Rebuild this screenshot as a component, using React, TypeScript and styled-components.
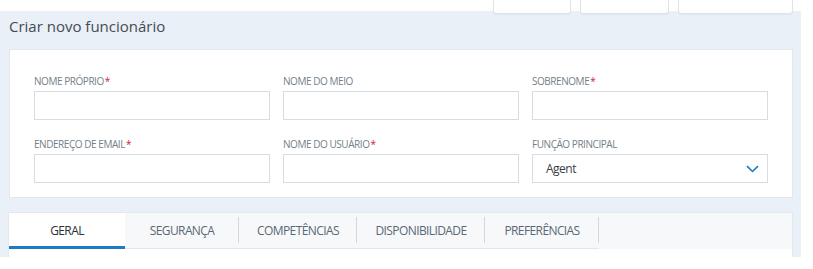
import React from "react";
import styled, { createGlobalStyle } from "styled-components";

const GlobalStyle = createGlobalStyle`
  html, body { margin: 0; padding: 0; background: #ffffff; }
  body { font-family: "Open Sans", "Noto Sans", Arial, sans-serif; }
  * { box-sizing: border-box; }
`;

const Page = styled.div`
  width: 813px;
  height: 269px;
  background: #ffffff;
  overflow: hidden;
`;

const Panel = styled.div`
  width: 801px;
  height: 246px;
  margin-top: 11px;
  background: #e9f0f7;
  padding: 0 8px 0 9px;
  display: flex;
  flex-direction: column;
`;

const Toolbar = styled.div`
  display: flex;
  justify-content: flex-end;
  gap: 9px;
  height: 14px;
  margin-top: -11px;
`;

const TopButton = styled.div<{ $w: number }>`
  width: ${(p) => p.$w}px;
  height: 14px;
  background: #ffffff;
  border: 1px solid #dfe4e9;
  border-top: none;
  border-radius: 0 0 3px 3px;
  box-shadow: 0 1px 1px rgba(0, 0, 0, 0.04);
`;

const Title = styled.h1`
  margin: 0;
  padding: 2px 0 13px;
  font-size: 15px;
  line-height: 20px;
  font-weight: 400;
  color: #454b51;
  letter-spacing: 0;
`;

const Card = styled.div`
  background: #ffffff;
  border: 1px solid #e3e8ee;
  padding: 24px 24px 14px;
`;

const FormGrid = styled.div`
  display: grid;
  grid-template-columns: repeat(3, 1fr);
  column-gap: 13px;
  row-gap: 17px;
`;

const Field = styled.div`
  display: flex;
  flex-direction: column;
`;

const Label = styled.label`
  font-size: 10px;
  line-height: 14px;
  margin-bottom: 3px;
  color: #737f8a;
  letter-spacing: -0.45px;
  text-transform: uppercase;
  white-space: nowrap;
`;

const Req = styled.span`
  color: #d7182a;
  margin-left: 1px;
`;

const Input = styled.div`
  height: 29px;
  background: #ffffff;
  border: 1px solid #d7dce1;
`;

const Select = styled(Input)`
  display: flex;
  align-items: center;
  justify-content: space-between;
  padding: 0 8px 0 13px;
  font-size: 12px;
  letter-spacing: -0.5px;
  color: #3a4046;
`;

const TabsCard = styled.div`
  margin-top: 14px;
  margin-left: -1px;
  flex: 1;
  background: #ffffff;
  border: 1px solid #e3e8ee;
  border-bottom: none;
`;

const TabBar = styled.div`
  display: flex;
  height: 36px;
  background: #f6f8fa;
`;

const Tab = styled.div<{ $w: number; $active?: boolean; $sep?: boolean }>`
  position: relative;
  width: ${(p) => p.$w}px;
  height: 36px;
  display: flex;
  align-items: center;
  justify-content: center;
  padding-top: ${(p) => (p.$active ? 2 : 0)}px;
  font-size: 12px;
  letter-spacing: -0.6px;
  color: ${(p) => (p.$active ? "#2c3136" : "#5a6874")};
  background: ${(p) => (p.$active ? "#ffffff" : "transparent")};
  border-bottom: ${(p) => (p.$active ? "3px solid #1b7bc3" : "1px solid #e3e7eb")};
  white-space: nowrap;

  &::after {
    content: "";
    display: ${(p) => (p.$sep ? "block" : "none")};
    position: absolute;
    right: 0;
    top: 4px;
    bottom: 5px;
    width: 1px;
    background: #d3d8dd;
  }
`;

const Chevron = () => (
  <svg width="13" height="8" viewBox="0 0 13 8" fill="none">
    <path d="M1 1.2L6.5 6.5L12 1.2" stroke="#1b7bc3" strokeWidth="1.6" />
  </svg>
);

const fields = [
  { label: "Nome próprio", req: true },
  { label: "Nome do meio", req: false },
  { label: "Sobrenome", req: true },
  { label: "Endereço de email", req: true },
  { label: "Nome do usuário", req: true },
];

const tabs = [
  { name: "GERAL", w: 116, active: true },
  { name: "SEGURANÇA", w: 114 },
  { name: "COMPETÊNCIAS", w: 118 },
  { name: "DISPONIBILIDADE", w: 128 },
  { name: "PREFERÊNCIAS", w: 114 },
];

export default function App() {
  return (
    <>
      <GlobalStyle />
      <Page>
        <Panel>
          <Toolbar>
            <TopButton $w={78} />
            <TopButton $w={89} />
            <TopButton $w={115} />
          </Toolbar>
          <Title>Criar novo funcionário</Title>
          <Card>
            <FormGrid>
              {fields.map((f) => (
                <Field key={f.label}>
                  <Label>
                    {f.label}
                    {f.req && <Req>*</Req>}
                  </Label>
                  <Input />
                </Field>
              ))}
              <Field>
                <Label>Função principal</Label>
                <Select>
                  <span>Agent</span>
                  <Chevron />
                </Select>
              </Field>
            </FormGrid>
          </Card>
          <TabsCard>
            <TabBar>
              {tabs.map((t) => (
                <Tab key={t.name} $w={t.w} $active={t.active} $sep={!t.active}>
                  {t.name}
                </Tab>
              ))}
            </TabBar>
          </TabsCard>
        </Panel>
      </Page>
    </>
  );
}
